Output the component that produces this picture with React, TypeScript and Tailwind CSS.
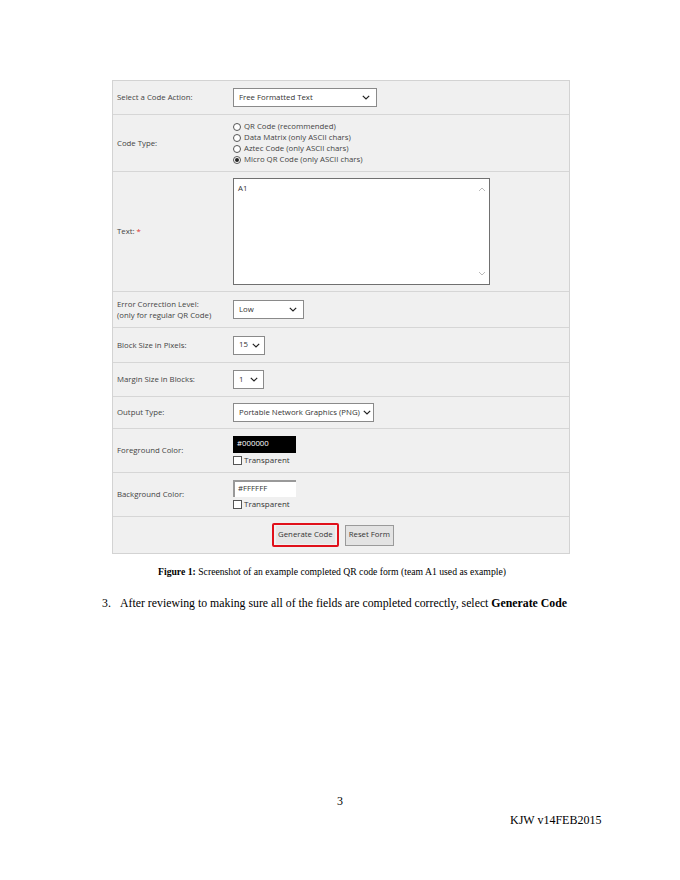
import React from "react";

const ui = { fontFamily: '"Open Sans", "Noto Sans", sans-serif' };
const serif = { fontFamily: '"Liberation Serif", "Times New Roman", serif' };

function Chevron() {
  return (
    <svg width="8" height="5" viewBox="0 0 8 5" className="shrink-0">
      <path d="M0.8 0.8 L4 4 L7.2 0.8" fill="none" stroke="#222" strokeWidth="1.2" />
    </svg>
  );
}

function Select({ value, w, pr = "pr-[6px]" }: { value: string; w: string; pr?: string }) {
  return (
    <div className={`${w} ${pr} h-[19px] flex items-center justify-between gap-[3px] bg-white border border-[#8a8a8a] pl-[5px] text-[#333] whitespace-nowrap`}>
      <span>{value}</span>
      <Chevron />
    </div>
  );
}

function Radio({ checked, label }: { checked?: boolean; label: string }) {
  return (
    <div className="flex items-center gap-[3px] h-[11px]">
      <span className="w-[8px] h-[8px] rounded-full border border-[#555] bg-white flex items-center justify-center">
        {checked && <span className="w-[4px] h-[4px] rounded-full bg-[#222]" />}
      </span>
      <span>{label}</span>
    </div>
  );
}

function Check() {
  return (
    <div className="flex items-center gap-[2px] h-[11px] mt-[2px]">
      <span className="w-[9px] h-[9px] border border-[#555] bg-white" />
      <span className="text-[8px]">Transparent</span>
    </div>
  );
}

function Row({ label, h, children }: { label: React.ReactNode; h: string; children: React.ReactNode }) {
  return (
    <div className={`grid grid-cols-[120px_1fr] ${h} border-b border-[#d6d6d6]`}>
      <div className="flex items-center pl-[4px] text-[#444] leading-[11px]">{label}</div>
      <div className="flex flex-col justify-center">{children}</div>
    </div>
  );
}

export default function App() {
  return (
    <div className="w-[680px] h-[880px] bg-white text-black">
      <div className="pt-[80px] pl-[112px]">
        <div className="w-[458px] border border-[#d3d3d3] bg-[#f0f0f0] text-[7.8px] text-[#333]" style={ui}>
          <Row label="Select a Code Action:" h="h-[34px]">
            <Select value="Free Formatted Text" w="w-[144px]" />
          </Row>
          <Row label="Code Type:" h="h-[57px]">
            <div className="text-[#444]">
              <Radio label="QR Code (recommended)" />
              <Radio label="Data Matrix (only ASCII chars)" />
              <Radio label="Aztec Code (only ASCII chars)" />
              <Radio checked label="Micro QR Code (only ASCII chars)" />
            </div>
          </Row>
          <Row label={<span>Text: <span className="text-[#d33]">*</span></span>} h="h-[120px]">
            <div className="w-[257px] h-[107px] bg-white border border-[#707070] flex">
              <div className="flex-1 pl-[4px] pt-[4px]">A1</div>
              <div className="w-[14px] flex flex-col justify-between items-center py-[8px]">
                <svg width="8" height="5" viewBox="0 0 8 5"><path d="M1 4 L4 1 L7 4" fill="none" stroke="#bbb" strokeWidth="1" /></svg>
                <svg width="8" height="5" viewBox="0 0 8 5"><path d="M1 1 L4 4 L7 1" fill="none" stroke="#bbb" strokeWidth="1" /></svg>
              </div>
            </div>
          </Row>
          <Row label={<span>Error Correction Level:<br />(only for regular QR Code)</span>} h="h-[36px]">
            <Select value="Low" w="w-[71px]" />
          </Row>
          <Row label="Block Size in Pixels:" h="h-[35px]">
            <Select value="15" w="w-[32px]" pr="pr-[4px]" />
          </Row>
          <Row label="Margin Size in Blocks:" h="h-[34px]">
            <Select value="1" w="w-[31px]" pr="pr-[5px]" />
          </Row>
          <Row label="Output Type:" h="h-[32px]">
            <Select value="Portable Network Graphics (PNG)" w="w-[141px]" pr="pr-[3px]" />
          </Row>
          <Row label="Foreground Color:" h="h-[44px]">
            <div className="w-[63px] h-[17px] bg-black text-white flex items-center pl-[4px]">#000000</div>
            <Check />
          </Row>
          <Row label="Background Color:" h="h-[44px]">
            <div className="w-[63px] h-[17px] bg-white border-t-2 border-l-2 border-[#999] flex items-center pl-[3px]">#FFFFFF</div>
            <Check />
          </Row>
          <div className="h-[36px] flex items-center justify-center gap-[6px] pr-[16px]">
            <div className="h-[24px] px-[2px] border-2 border-[#e0101a] rounded-[2px] flex items-center">
              <div className="h-[18px] px-[2px] bg-[#e6e6e6] flex items-center">Generate Code</div>
            </div>
            <div className="h-[21px] px-[3px] bg-[#e3e3e3] border border-[#9a9a9a] flex items-center">Reset Form</div>
          </div>
        </div>
      </div>

      <div className="text-center text-[9.7px] mt-[11px] pr-[16px]" style={serif}>
        <b>Figure 1:</b> Screenshot of an example completed QR code form (team A1 used as example)
      </div>
      <div className="flex text-[11.8px] mt-[15px] pl-[102px]" style={serif}>
        <span className="w-[18px]">3.</span>
        <span>After reviewing to making sure all of the fields are completed correctly, select <b>Generate Code</b></span>
      </div>

      <div className="text-center text-[12px] mt-[180px]" style={serif}>3</div>
      <div className="text-[12px] mt-[1px] pl-[510px]" style={serif}>KJW v14FEB2015</div>
    </div>
  );
}
